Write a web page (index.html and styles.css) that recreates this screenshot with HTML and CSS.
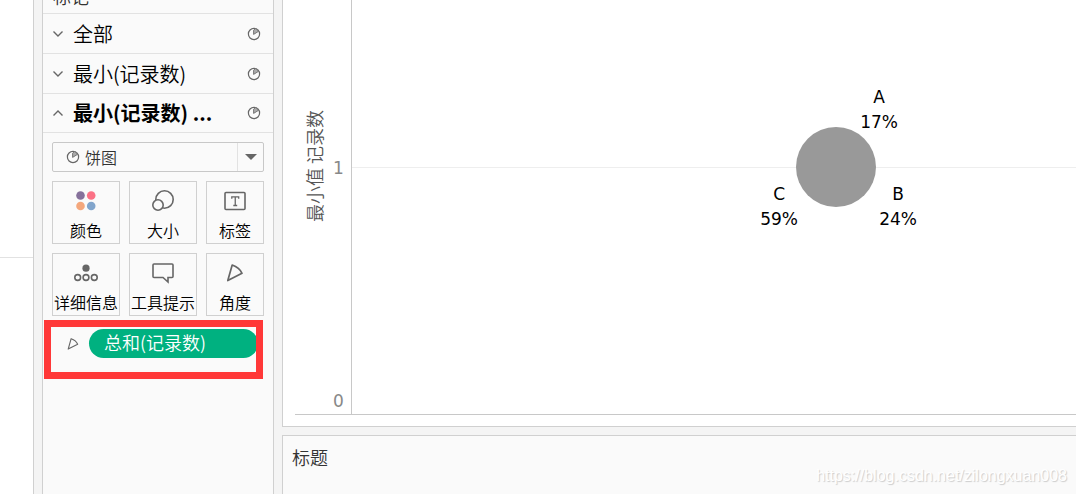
FILE: index.html
```html
<!DOCTYPE html>
<html lang="zh-CN">
<head>
<meta charset="utf-8">
<title>标记</title>
<link rel="stylesheet" href="styles.css">
</head>
<body>
<svg class="defs" aria-hidden="true">
  <symbol id="pie" viewBox="0 0 14 14">
    <circle cx="7" cy="7" r="5.6" fill="none" stroke="#666" stroke-width="1.2"/>
    <path d="M6.600 7.400V3.200L8.400 1.600Q10.500 2 11.400 4.400Z" fill="#aaa" stroke="#777" stroke-width="1"/>
  </symbol>
  <symbol id="down" viewBox="0 0 12 12"><path d="M1.500 3.500 6 8l4.500-4.500" fill="none" stroke="#666" stroke-width="1.400"/></symbol>
  <symbol id="up" viewBox="0 0 12 12"><path d="M1.500 8.500 6 4l4.500 4.500" fill="none" stroke="#666" stroke-width="1.400"/></symbol>
  <symbol id="angle" viewBox="0 0 24 24">
    <path d="M9.200 4 4.800 19.600 19 12.300Q16.500 6.500 9.200 4Z" fill="none" stroke="#666" stroke-width="1.700" stroke-linejoin="round"/>
  </symbol>
</svg>
<div class="app">
  <aside class="rail"><div class="rail-top"></div></aside>
  <section class="marks">
    <h2 class="marks-title">标记</h2>
    <button class="layer"><svg class="chev"><use href="#down"/></svg><span class="layer-name">全部</span><svg class="pie"><use href="#pie"/></svg></button>
    <button class="layer"><svg class="chev"><use href="#down"/></svg><span class="layer-name">最小(记录数)</span><svg class="pie"><use href="#pie"/></svg></button>
    <button class="layer current"><svg class="chev"><use href="#up"/></svg><span class="layer-name">最小(记录数) ...</span><svg class="pie"><use href="#pie"/></svg></button>
    <div class="card">
      <div class="type">
        <select class="type-select" aria-label="标记类型"><option>饼图</option></select>
        <svg class="pie type-icon"><use href="#pie"/></svg>
        <span class="type-arrow"></span>
      </div>
      <div class="tools">
        <button class="tool"><svg class="tool-icon" viewBox="0 0 24 24"><circle cx="6.500" cy="6.500" r="4.300" fill="#86719b"/><circle cx="17.200" cy="6.500" r="4.300" fill="#fb7185"/><circle cx="6.500" cy="17" r="4.300" fill="#f4a77c"/><circle cx="17.200" cy="17" r="4.300" fill="#82a5cc"/></svg>颜色</button>
        <button class="tool"><svg class="tool-icon" viewBox="0 0 24 24" fill="none" stroke="#666" stroke-width="1.600"><circle cx="13.500" cy="10.500" r="8.700"/><circle cx="7" cy="16" r="5.200" fill="#fafafa"/></svg>大小</button>
        <button class="tool"><svg class="tool-icon" viewBox="0 0 24 24" fill="none" stroke="#666" stroke-width="1.600"><rect x="2" y="3.500" width="20" height="17" rx="1"/><path d="M8.800 9.800V7.800h6.900v2M12.250 7.800v8.700M10.300 16.500h3.900" stroke-width="1.300"/></svg>标签</button>
        <button class="tool"><svg class="tool-icon" viewBox="0 0 24 24" fill="none" stroke="#666" stroke-width="1.600"><circle cx="12" cy="7.200" r="3.600" fill="#666" stroke="none"/><circle cx="3.700" cy="16.500" r="2.900"/><circle cx="12" cy="16.500" r="2.900"/><circle cx="20.300" cy="16.500" r="2.900"/></svg>详细信息</button>
        <button class="tool"><svg class="tool-icon" viewBox="0 0 24 24" fill="none" stroke="#666" stroke-width="1.600"><path d="M3 3h18q1 0 1 1v11.500q0 1-1 1h-4V21l-5-4.500H3q-1 0-1-1V4q0-1 1-1Z"/></svg>工具提示</button>
        <button class="tool"><svg class="tool-icon"><use href="#angle"/></svg>角度</button>
      </div>
      <div class="field">
        <svg class="field-icon"><use href="#angle"/></svg>
        <button class="pill">总和(记录数)</button>
        <span class="highlight"></span>
      </div>
    </div>
  </section>
  <main class="view">
    <section class="chart">
      <div class="y-title"><span class="y-text">最小值 记录数</span></div>
      <div class="ticks"><span class="tick one">1</span><span class="tick zero">0</span></div>
      <div class="plot">
        <div class="gridline"></div>
        <div class="disc"></div>
        <div class="mark a">A<br>17%</div>
        <div class="mark b">B<br>24%</div>
        <div class="mark c">C<br>59%</div>
      </div>
    </section>
    <section class="caption">
      <h2 class="caption-title">标题</h2>
      <span class="credit">https://blog.csdn.net/zilongxuan008</span>
    </section>
  </main>
</div>
</body>
</html>
```
FILE: styles.css
```css
* { box-sizing: border-box; }
body {
  margin: 0;
  background: #f4f4f4;
  color: #000;
  font-family: "Noto Sans CJK SC", sans-serif;
  font-size: 16px;
  font-weight: 350;
}
button, select { font: inherit; color: inherit; margin: 0; }
svg { display: block; flex: none; }
.defs { position: absolute; width: 0; height: 0; }
.app { display: flex; gap: 8px; height: 100vh; overflow: hidden; }

.rail { flex: none; width: 34px; background: #fff; border-right: 1px solid #d0d0d0; }
.rail-top { height: 258px; border-bottom: 1px solid #e2e2e2; }

.marks {
  flex: none;
  width: 232px;
  background: #fafafa;
  border: solid #d0d0d0;
  border-width: 0 1px;
}
.marks-title {
  display: flex;
  align-items: flex-end;
  height: 14px;
  margin: 0;
  padding: 0 10px 5px;
  overflow: hidden;
  border-bottom: 1px solid #e2e2e2;
  color: #333;
  font-size: 18px;
  font-weight: 350;
  line-height: 24px;
}
.layer {
  display: flex;
  align-items: center;
  width: 100%;
  height: 40px;
  padding: 0 12px 0 9px;
  border: 0;
  border-bottom: 1px solid #e2e2e2;
  background: none;
  font-size: 20px;
  line-height: 28px;
  text-align: left;
}
.current { height: 39px; font-weight: 700; }
.chev { width: 12px; height: 12px; }
.layer-name { flex: 1; padding-left: 9px; white-space: nowrap; }
.pie { width: 14px; height: 14px; }

.card { padding: 9px; }
.type { position: relative; }
.type-select {
  display: block;
  width: 100%;
  height: 30px;
  padding: 0 32px;
  border: 1px solid #c8c8c8;
  border-radius: 2px;
  background: #fafafa;
  color: #333;
  appearance: none;
}
.type-icon { position: absolute; left: 14px; top: 8px; }
.type-arrow {
  position: absolute;
  top: 1px;
  right: 1px;
  bottom: 1px;
  width: 26px;
  border-left: 1px solid #e2e2e2;
  pointer-events: none;
}
.type-arrow::after {
  content: "";
  position: absolute;
  left: 7px;
  top: 11px;
  border: solid transparent;
  border-width: 6px 6px 0;
  border-top-color: #666;
}
.tools {
  display: grid;
  grid-template-columns: 68px 68px 1fr;
  gap: 9px;
  margin-top: 9px;
}
.tool {
  display: flex;
  flex-direction: column;
  align-items: center;
  gap: 5px;
  height: 63px;
  padding: 7px 0 0;
  border: 1px solid #d0d0d0;
  background: #fafafa;
  line-height: 24px;
  white-space: nowrap;
}
.tool-icon { width: 24px; height: 24px; }
.field { position: relative; display: flex; align-items: center; margin-top: 13px; }
.field-icon { width: 16px; height: 16px; margin: 0 8px 0 13px; }
.pill {
  flex: 1;
  height: 29px;
  margin-right: 6px;
  padding: 0 15px 2px;
  border: 0;
  border-radius: 15px;
  background: #00b180;
  color: #fff;
  font-size: 18px;
  line-height: 27px;
  text-align: left;
}
.highlight {
  position: absolute;
  inset: -9px 1px -21px -8px;
  border: 7px solid #ff3838;
  pointer-events: none;
}

.view { flex: 1; display: flex; flex-direction: column; gap: 8px; min-width: 0; }
.chart {
  flex: 1;
  display: grid;
  grid-template-columns: 38px 18px 1fr;
  min-height: 0;
  padding: 0 0 11px 12px;
  border: solid #d0d0d0;
  border-width: 0 0 1px 1px;
  background: #fff;
}
.y-title, .ticks { border-bottom: 1px solid #c8c8c8; color: #555; }
.y-title { display: flex; align-items: flex-start; justify-content: center; padding-top: 110px; }
.y-text {
  writing-mode: vertical-rl;
  text-orientation: sideways;
  transform: rotate(180deg);
  font-size: 18px;
  line-height: 28px;
}
.ticks {
  display: flex;
  flex-direction: column;
  justify-content: space-between;
  padding-top: 155px;
  color: #888;
  font-family: "DejaVu Sans", sans-serif;
  font-size: 17px;
  font-weight: 400;
  line-height: 26px;
}
.plot {
  position: relative;
  border-left: 1px solid #c8c8c8;
  border-bottom: 1px solid #c8c8c8;
}
.gridline { position: absolute; top: 167px; left: 0; right: 0; border-top: 1px solid #eee; }
.disc {
  position: absolute;
  left: 66.9%;
  top: 127px;
  width: 80px;
  height: 80px;
  margin-left: -40px;
  border-radius: 50%;
  background: #999;
}
.mark {
  position: absolute;
  left: 67%;
  width: 40px;
  font-family: "DejaVu Sans", sans-serif;
  font-size: 17px;
  font-weight: 400;
  line-height: 25px;
  text-align: center;
}
.a { top: 85px; margin-left: 22px; }
.b { top: 182px; margin-left: 41px; }
.c { top: 182px; margin-left: -78px; }

.caption {
  display: flex;
  justify-content: space-between;
  height: 59px;
  padding: 8px 9px 8px 9px;
  border: solid #d0d0d0;
  border-width: 1px 0 0 1px;
  background: #fafafa;
}
.caption-title { margin: 0; color: #333; font-size: 18px; font-weight: 350; line-height: 27px; }
.credit {
  align-self: flex-end;
  color: #fff;
  font-family: "Liberation Sans", Arial, sans-serif;
  font-size: 16px;
  line-height: 20px;
  text-shadow: 1px 1px 1px #ccc;
}
```
